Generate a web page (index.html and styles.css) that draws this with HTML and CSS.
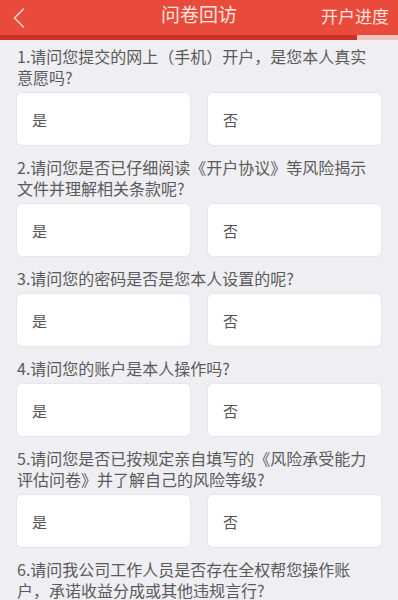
FILE: index.html
```html
<!DOCTYPE html>
<html lang="zh">
<head>
<meta charset="utf-8">
<link rel="stylesheet" href="styles.css">
</head>
<body>
<header class="nav">
  <span class="back"><svg width="12" height="20" viewBox="0 0 12 20"><path d="M10.5 1 L1.5 10 L10.5 19" fill="none" stroke="#f6d3cc" stroke-width="1.6" stroke-linecap="round" stroke-linejoin="round"/></svg></span>
  <span class="title">问卷回访</span>
  <span class="right">开户进度</span>
</header>
<div class="progress"><div class="progress-fill" style="width:357px"></div></div>
<main class="list">
  <section class="q first">
    <p class="q-text">1.请问您提交的网上（手机）开户，是您本人真实意愿吗?</p>
    <div class="opts"><div class="opt">是</div><div class="opt">否</div></div>
  </section>
  <section class="q">
    <p class="q-text">2.请问您是否已仔细阅读《开户协议》等风险揭示文件并理解相关条款呢?</p>
    <div class="opts"><div class="opt">是</div><div class="opt">否</div></div>
  </section>
  <section class="q">
    <p class="q-text">3.请问您的密码是否是您本人设置的呢?</p>
    <div class="opts"><div class="opt">是</div><div class="opt">否</div></div>
  </section>
  <section class="q">
    <p class="q-text">4.请问您的账户是本人操作吗?</p>
    <div class="opts"><div class="opt">是</div><div class="opt">否</div></div>
  </section>
  <section class="q">
    <p class="q-text">5.请问您是否已按规定亲自填写的《风险承受能力评估问卷》并了解自己的风险等级?</p>
    <div class="opts"><div class="opt">是</div><div class="opt">否</div></div>
  </section>
  <section class="q">
    <p class="q-text">6.请问我公司工作人员是否存在全权帮您操作账户，承诺收益分成或其他违规言行?</p>
    <div class="opts"><div class="opt">是</div><div class="opt">否</div></div>
  </section>
</main>
</body>
</html>
```
FILE: styles.css
```css
html, body {
  margin: 0;
  padding: 0;
  background: #efeff3;
  font-family: "Noto Sans CJK SC", "Liberation Sans", sans-serif;
  overflow: hidden;
}
.nav {
  height: 35px;
  background: #e84a3b;
  display: flex;
  align-items: center;
  position: relative;
  padding: 0 9px 6px 13px;
  box-sizing: border-box;
}
.back {
  display: flex;
  align-items: center;
  height: 22px;
  margin-top: 6px;
}
.title {
  position: absolute;
  left: 0;
  right: 0;
  top: 1px;
  text-align: center;
  color: #fbe3de;
  font-size: 19px;
  line-height: 26px;
  pointer-events: none;
}
.right {
  margin-left: auto;
  color: #fbe3de;
  font-size: 17px;
  line-height: 26px;
  margin-top: 2px;
}
.progress {
  height: 5px;
  background: #f3c3bd;
}
.progress-fill {
  height: 100%;
  background: #c8342b;
}
.list {
  padding: 0 17px;
}
.q {
  padding-top: 12px;
}
.q.first {
  padding-top: 6px;
}
.q-text {
  margin: 0;
  font-size: 16px;
  line-height: 21px;
  color: #5a5a5a;
}
.opts {
  margin-top: 5px;
  display: grid;
  grid-template-columns: 1fr 1fr;
  gap: 18px;
}
.opt {
  height: 52px;
  background: #fff;
  border-radius: 5px;
  box-shadow: 0 0 0 1px #e6e6ea;
  display: flex;
  align-items: center;
  padding-left: 15px;
  font-size: 15px;
  color: #555;
}
```
